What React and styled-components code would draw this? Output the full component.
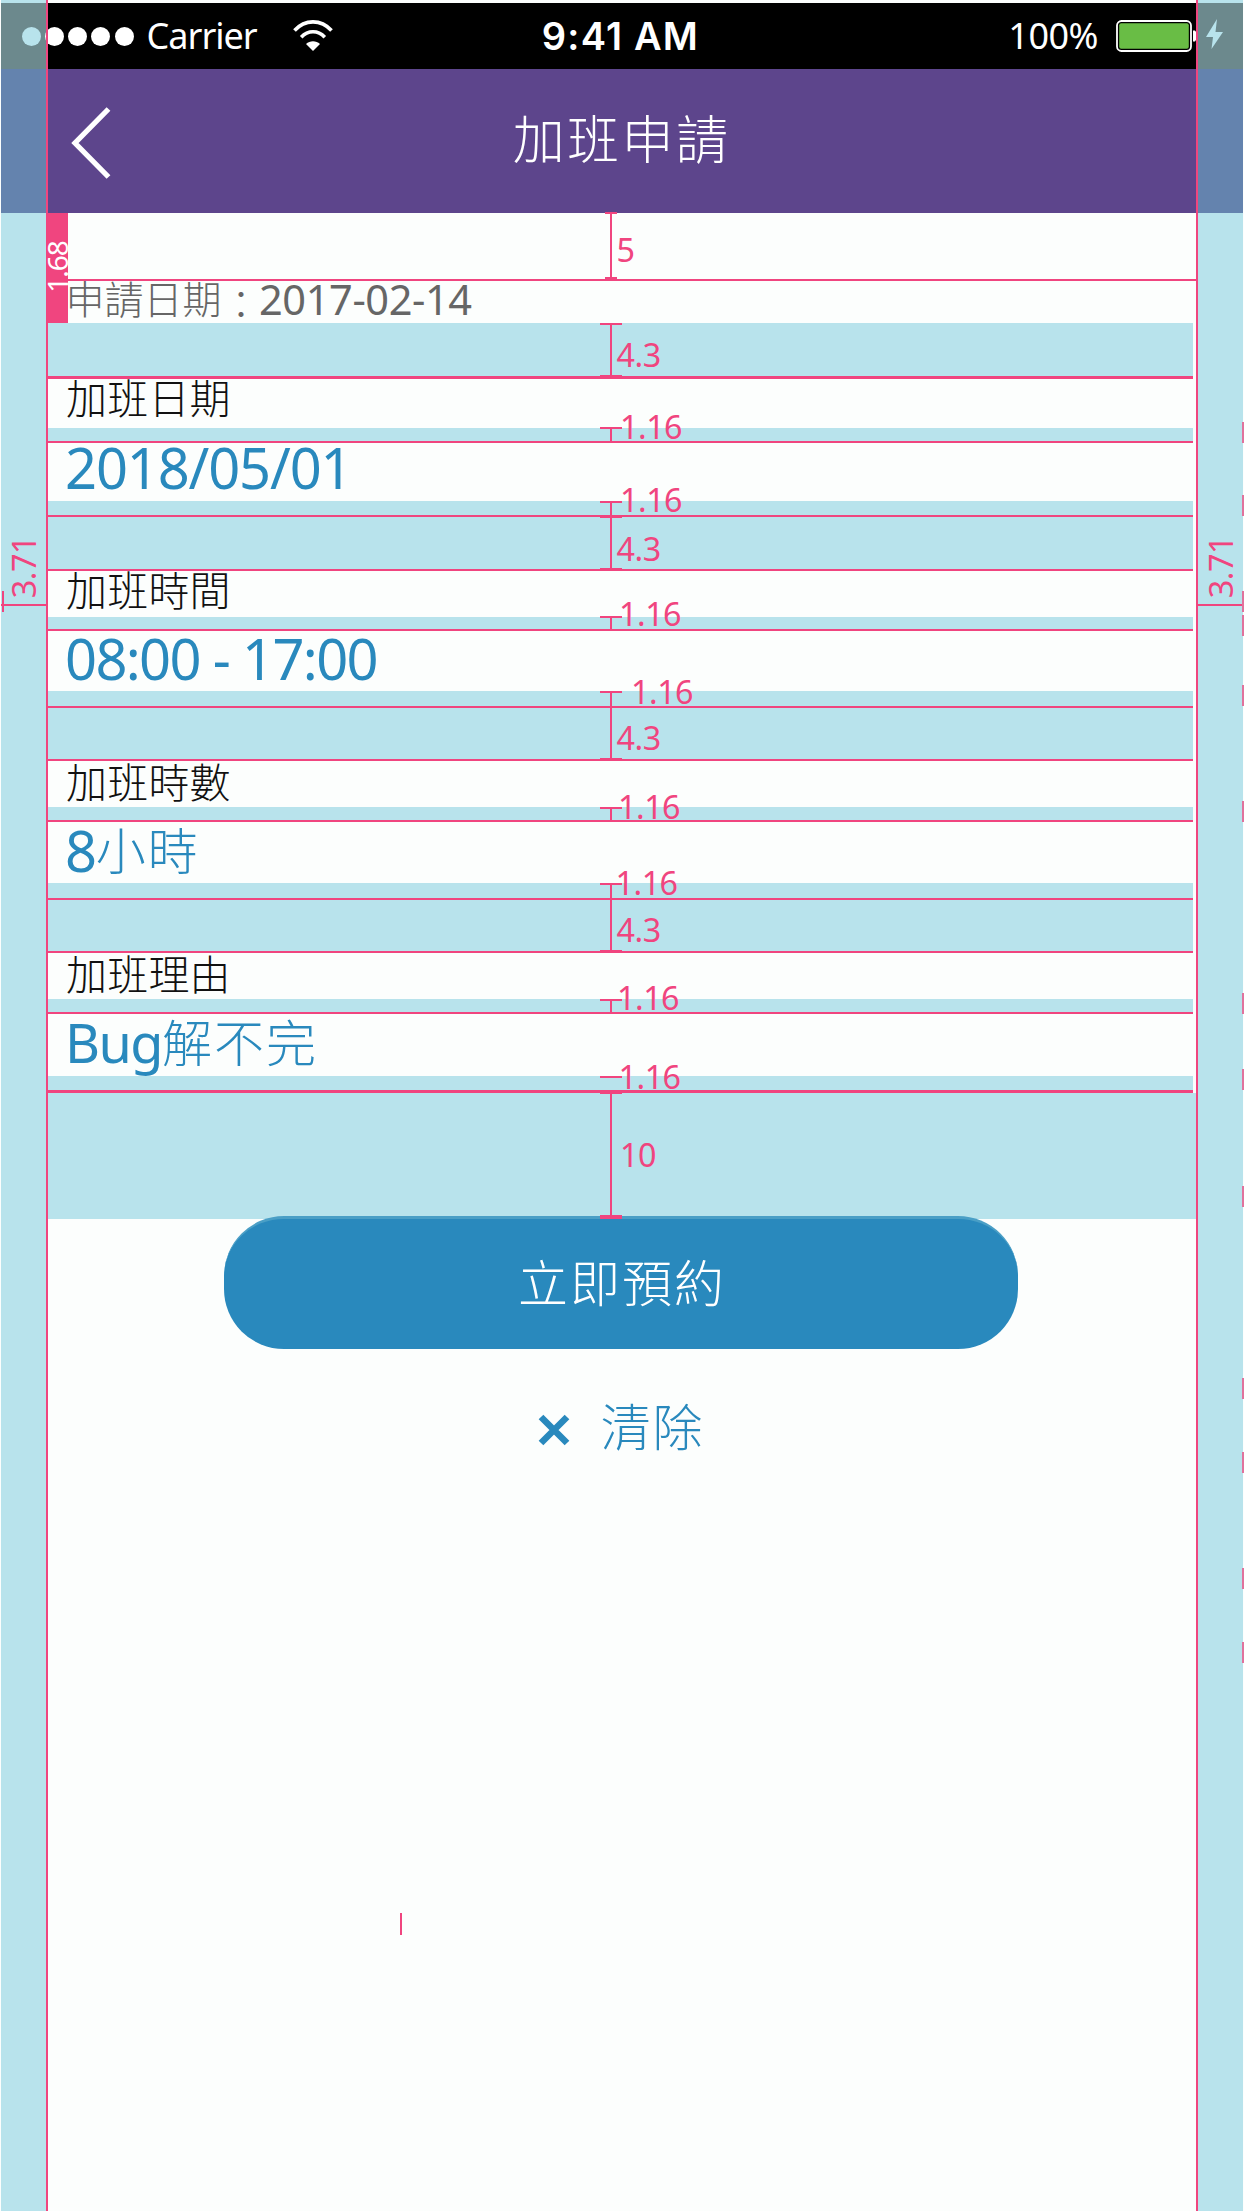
import React from 'react';
import styled, { createGlobalStyle } from 'styled-components';

const pink = '#f0457f';
const band = '#b8e3ec';
const paper = '#fcfefd';
const blue = '#2989bd';

const Global = createGlobalStyle`
  *, *::before, *::after { box-sizing: border-box; }
  html, body { margin: 0; padding: 0; background: ${paper}; }
  body { font-family: "Noto Sans", "Noto Sans CJK TC", sans-serif; }
`;

const Screen = styled.main`
  position: relative;
  display: flex;
  flex-direction: column;
  width: 1244px;
  height: 2211px;
  overflow: hidden;
  background: ${paper};
`;

const Row = styled.div`
  display: grid;
  grid-template-columns: 46px 1fr 46px;
  width: 1242px;
  margin-left: 1px;
  flex: ${p => (p.$grow ? '1' : '0 0 auto')};
  height: ${p => (p.$h ? p.$h + 'px' : 'auto')};
`;
const Rail = styled.div`
  display: flex;
  align-items: center;
  background: ${p => p.$color || band};
`;

const StatusBar = styled.div`
  display: grid;
  grid-template-columns: 1fr auto 1fr;
  align-items: center;
  background: #000;
  color: #fff;
  white-space: pre;
`;
const StatusGroup = styled.div`
  display: flex;
  align-items: center;
  justify-content: ${p => p.$end ? 'flex-end' : 'flex-start'};
`;
const Dot = styled.span`
  width: 19px;
  height: 19px;
  border-radius: 50%;
  flex: none;
  margin-left: ${p => p.$gap ?? 4.2}px;
  background: ${p => p.$color || '#fff'};
`;
const Carrier = styled.span`
  margin: 0 36px 0 13px;
  font-size: 36px;
  line-height: 50px;
  letter-spacing: -1px;
`;
const Clock = styled.span`
  margin: 0 3px 1px 0;
  font: 600 38px/50px Inter, "Noto Sans", sans-serif;
  letter-spacing: 1.2px;
`;
const Percent = styled.span`
  margin-right: 18px;
  font-size: 36px;
  line-height: 50px;
  letter-spacing: -0.5px;
`;
const NavBar = styled.header`
  display: grid;
  grid-template-columns: 64px 1fr 64px;
  align-items: center;
  padding: 0 25px 0 24px;
  background: #5d458c;
`;
const BackIcon = styled.svg`
  margin-top: 4px;
`;
const Title = styled.h1`
  margin: 0 0 9px;
  color: #fff;
  text-align: center;
  font: 300 52px/60px "Noto Sans CJK TC", sans-serif;
  letter-spacing: 2.4px;
`;

const Content = styled.div`
  display: flex;
  flex-direction: column;
  width: 1146px;
`;
const Intro = styled.div`
  display: flex;
  flex-direction: column;
  height: ${p => p.$h}px;
`;
const Rule = styled.div`
  flex: none;
  height: ${p => p.$h || 2}px;
  width: ${p => p.$wide ? '1150px' : '100%'};
  background: ${pink};
`;
const Gap = styled.div`
  flex: none;
  height: ${p => p.$h}px;
  width: ${p => p.$wide ? '1149px' : '100%'};
  background: ${p => p.$clear ? 'transparent' : band};
`;
const TextLine = styled.div`
  position: relative;
  z-index: 1;
  flex: none;
  display: flex;
  align-items: flex-start;
  height: ${p => p.$h}px;
  padding-left: ${p => p.$left ?? 19}px;
  white-space: pre;
`;
const AppliedOn = styled.span`
  margin-top: ${p => p.$top || 0}px;
  margin-right: ${p => p.$right || 0}px;
  color: #666;
  font: 300 39px/40px "Noto Sans CJK TC", sans-serif;
`;
const AppliedDate = styled.span`
  margin-top: -2.5px;
  color: #666;
  font: 400 41.5px/40px "Noto Sans", sans-serif;
  letter-spacing: -0.4px;
`;
const Label = styled.span`
  margin-top: ${p => p.$top}px;
  color: #111;
  font: 300 41px/40px "Noto Sans CJK TC", sans-serif;
  letter-spacing: 0.2px;
`;
const Value = styled.span`
  margin-top: ${p => p.$top}px;
  color: ${blue};
  font: ${p => p.$cjk ? '300 50px/56px "Noto Sans CJK TC"' : `400 ${p.$size || 56}px/56px "Noto Sans"`}, sans-serif;
  letter-spacing: ${p => p.$track ?? (p.$cjk ? 2 : -1.7)}px;
`;

const Actions = styled.div`
  display: flex;
  flex-direction: column;
  align-items: center;
  margin-top: -3px;
  width: 1148px;
`;
const Submit = styled.button`
  width: 794px;
  height: 133px;
  padding: 0 0 9px 2px;
  border: 0;
  border-radius: 60px;
  border-top: 3px solid #4a9fc6;
  background: ${blue};
  color: #fff;
  font: 300 50px/60px "Noto Sans CJK TC", sans-serif;
  letter-spacing: 2px;
`;
const Clear = styled.button`
  display: flex;
  align-items: center;
  gap: 31px;
  margin-top: 42px;
  padding: 0;
  border: 0;
  background: none;
  color: ${blue};
  font: 300 50px/66px "Noto Sans CJK TC", sans-serif;
  letter-spacing: 2px;
  & > svg { margin-top: 11px; }
`;

/* Spacing annotations drawn over the screen */
const Overlay = styled.div`
  position: absolute;
  inset: 0;
  z-index: 2;
  pointer-events: none;
`;
const Mark = styled.i`
  position: absolute;
  left: ${p => p.$x}px;
  top: ${p => p.$y}px;
  width: ${p => p.$w}px;
  height: ${p => p.$h}px;
  background: ${p => p.$color || pink};
`;
const Figure = styled.span`
  position: absolute;
  left: ${p => p.$x}px;
  top: ${p => p.$y - 11}px;
  color: ${pink};
  font-size: 32.3px;
  line-height: 44px;
  letter-spacing: -0.5px;
  white-space: pre;
`;
const SideFigure = styled.span`
  position: absolute;
  left: ${p => p.$x}px;
  top: ${p => p.$y}px;
  width: ${p => p.$w || 23}px;
  height: ${p => p.$len || 54}px;
  display: flex;
  align-items: center;
  justify-content: center;
  color: ${p => p.$color || pink};
  font-size: ${p => p.$size || 32.3}px;
  line-height: 1;
  letter-spacing: ${p => p.$track || 0}px;
  & > span { transform: rotate(-90deg); white-space: pre; }
`;

const fields = [
  { label: '加班日期', value: [['2018/05/01', 0, -1.15, -4.5]], h: [2.5, 49.5, 13, 2, 58, 14, 2], lt: -2.5, after: 52 },
  { label: '加班時間', value: [['08:00 - 17:00', 0, -1.65, -0.5]], h: [2, 45.5, 12, 2, 60.5, 15, 2], lt: -3, after: 51 },
  { label: '加班時數', value: [['8', 0, -1.2, 0], ['小時', 1, 2, -2]], h: [2, 46, 13, 2, 61, 14.5, 2], lt: -1.2, after: 51 },
  { label: '加班理由', value: [['Bug', 0, -1.6, 0, 54], ['解不完', 1, 2, -2]], h: [2, 46.5, 12.5, 2, 62, 14.5, 3], lt: -0.7, after: 0 },
];

const dims = [
  [323, 376, 1, '4.3', 616.5, 343],
  [427, 441, 0, '1.16', 620, 415],
  [501, 515, 0, '1.16', 620, 488],
  [516, 569, 1, '4.3', 616.5, 537],
  [615.5, 629, 0, '1.16', 619, 602],
  [691, 706, 0, '1.16', 631, 679.5],
  [706, 759, 1, '4.3', 616.5, 726],
  [807, 820, 0, '1.16', 618, 795],
  [883, 898, 0, '1.16', 615.5, 871],
  [898, 951, 1, '4.3', 616.5, 918],
  [999, 1012, 0, '1.16', 617, 986],
  [1076, 1078, 0, '1.16', 618.5, 1065],
  [1092, 1216, 1, '10', 620, 1143],
];

const edgeTicks = [422, 495, 591, 615, 685, 801, 993, 1069, 1186, 1378, 1452, 1568, 1642];

function Wifi() {
  return (
    <svg width="40" height="32" viewBox="0 0 40 32" fill="none" stroke="#fff" strokeWidth="3.6">
      <path d="M1.5 10.5C12-1 28-1 38.500 10.500" />
      <path d="M8.200 17.200C15 10 25 10 31.800 17.200" />
      <path d="M20 31L13 24C17 20.200 23 20.200 27 24Z" fill="#fff" stroke="none" />
    </svg>
  );
}

function Battery() {
  return (
    <svg width="81" height="32" viewBox="0 0 81 32">
      <rect x="1" y="1" width="74" height="30" rx="4.500" fill="none" stroke="#fff" strokeWidth="1.8" />
      <rect x="3.200" y="3.200" width="69.600" height="25.600" rx="2" fill="#69bd45" />
      <path d="M77 10.500h2q2 1.500 2 5.500t-2 5.500h-2z" fill="#fff" />
    </svg>
  );
}

export default function App() {
  return (
    <>
      <Global />
      <Screen>
        <Row $h={3}><Rail /><div /><Rail /></Row>
        <Row $h={66}>
          <Rail $color="#6c898d"><Dot $gap={21} $color={band} /></Rail>
          <StatusBar>
            <StatusGroup>
              <Dot $gap={-2} /><Dot /><Dot /><Dot />
              <Carrier>Carrier</Carrier>
              <Wifi />
            </StatusGroup>
            <Clock>9:41 AM</Clock>
            <StatusGroup $end>
              <Percent>100%</Percent>
              <Battery />
            </StatusGroup>
          </StatusBar>
          <Rail $color="#6c898d">
            <svg width="46" height="66" viewBox="0 0 46 66"><path d="M20 16L9 34H16L14.500 46L26 29H18.500Z" fill={band} /></svg>
          </Rail>
        </Row>
        <Row $h={144}>
          <Rail $color="#6483ae" />
          <NavBar>
            <BackIcon width="42" height="72" viewBox="0 0 42 72" fill="none" stroke="#fff" strokeWidth="5.3"><path d="M37.500 2L4 36L37.500 70" /></BackIcon>
            <Title>加班申請</Title>
          </NavBar>
          <Rail $color="#6483ae" />
        </Row>
        <Row $grow>
          <Rail />
          <Content>
            <Intro $h={110}>
              <Gap $h={66} $clear />
              <Rule $wide />
              <TextLine $h={42} $left={18.5}>
                <AppliedOn $top={-4}>申請日期</AppliedOn>
                <AppliedOn $top={1} $right={-1.5}>：</AppliedOn>
                <AppliedDate>2017-02-14</AppliedDate>
              </TextLine>
            </Intro>
            <Gap $h={53} />
            {fields.map(f => (
              <React.Fragment key={f.label}>
                <Rule $h={f.h[0]} />
                <TextLine $h={f.h[1]}><Label $top={f.lt}>{f.label}</Label></TextLine>
                <Gap $h={f.h[2]} />
                <Rule $h={f.h[3]} />
                <TextLine $h={f.h[4]} $left={18}>
                  {f.value.map(([text, cjk, track, top, size]) => (
                    <Value key={text} $cjk={cjk} $track={track} $top={top} $size={size}>{text}</Value>
                  ))}
                </TextLine>
                <Gap $h={f.h[5]} />
                <Rule $h={f.h[6]} />
                {f.after > 0 && <Gap $h={f.after} />}
              </React.Fragment>
            ))}
            <Gap $h={126} $wide />
            <Actions>
              <Submit>立即預約</Submit>
              <Clear>
                <svg width="32" height="32" viewBox="0 0 32 32" stroke={blue} strokeWidth="6.6"><path d="M3 3L29 29M29 3L3 29" /></svg>
                清除
              </Clear>
            </Actions>
          </Content>
          <Rail />
        </Row>

        <Overlay>
          <Mark $x={46} $y={0} $w={1.5} $h={2211} />
          <Mark $x={1196} $y={0} $w={1.5} $h={2211} />
          <Mark $x={47} $y={213} $w={20.5} $h={110} />
          <SideFigure $x={47} $y={243} $w={20} $len={48} $size={28} $track={-1} $color="#fff"><span>1.68</span></SideFigure>

          <Mark $x={605} $y={212} $w={12} $h={2} />
          <Mark $x={610} $y={213} $w={2} $h={66} />
          <Mark $x={605} $y={277} $w={12} $h={2} />
          <Figure $x={616.5} $y={238}>5</Figure>

          {dims.map(([y1, y2, closed, text, x, y]) => (
            <React.Fragment key={y1}>
              <Mark $x={600} $y={y1} $w={21.5} $h={2} />
              <Mark $x={610} $y={y1} $w={1.5} $h={y2 - y1} />
              {closed ? <Mark $x={600} $y={y2 - 1} $w={21.5} $h={text === '10' ? 4 : 2} /> : null}
              <Figure $x={x} $y={y}>{text}</Figure>
            </React.Fragment>
          ))}

          <Mark $x={1} $y={604} $w={45} $h={2} />
          <Mark $x={2} $y={591} $w={2} $h={21} />
          <SideFigure $x={12} $y={540} $track={-0.5}><span>3.71</span></SideFigure>
          <Mark $x={1197} $y={604} $w={45} $h={2} />
          <SideFigure $x={1208.5} $y={540} $track={-0.5}><span>3.71</span></SideFigure>
          {edgeTicks.map(y => <Mark key={y} $x={1242} $y={y} $w={2} $h={21} $color="#e0729c" />)}
          <Mark $x={400} $y={1913} $w={2} $h={22} />
        </Overlay>
      </Screen>
    </>
  );
}
